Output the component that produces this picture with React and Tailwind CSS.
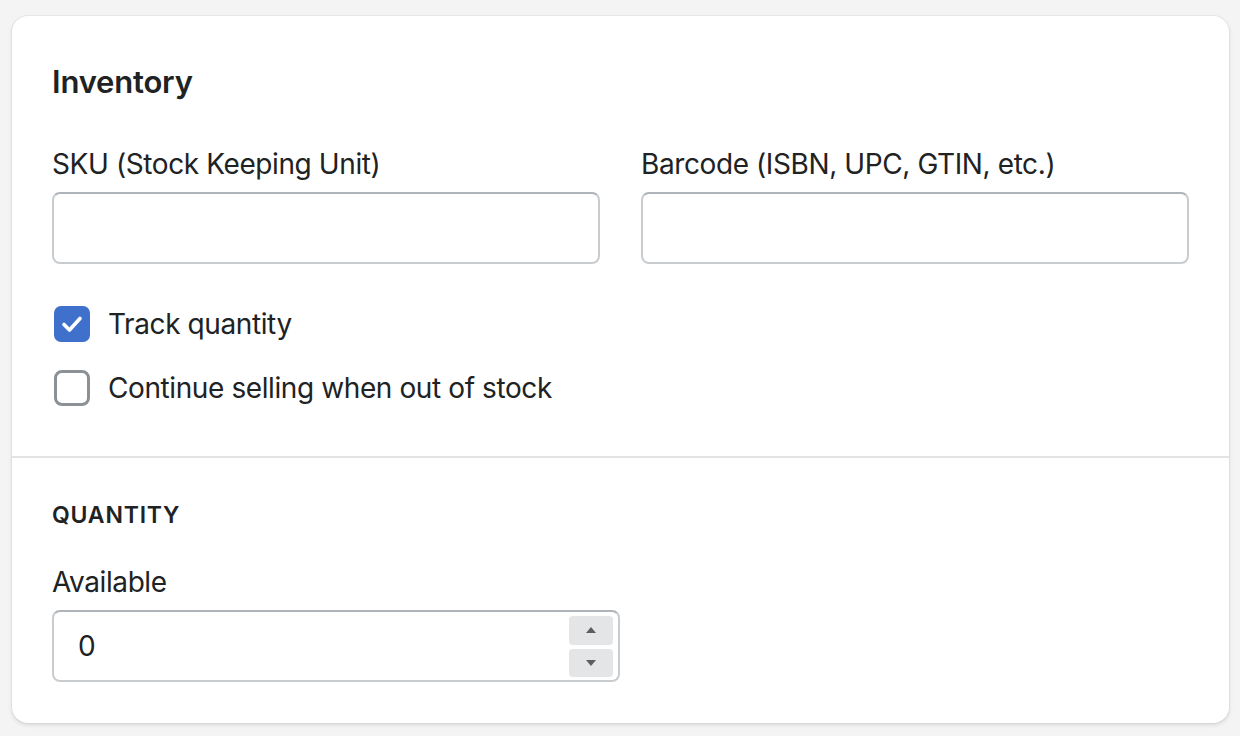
import React from "react";

export default function App() {
  return (
    <div className="min-h-[736px] w-[1240px] bg-[#f4f4f4] pt-[16px] pl-[12px] pr-[11px] pb-[14px]" style={{ fontFamily: "Inter, 'Noto Sans', sans-serif" }}>
      <div className="bg-white rounded-[16px] shadow-[0_0_0_1px_rgba(63,63,68,0.05),0_2px_4px_rgba(63,63,68,0.15)] text-[#202223]">
        <div className="px-[40px] pt-[46px] pb-[50px]">
          <h2 className="text-[31px] leading-[40px] font-semibold tracking-[-0.2px]">Inventory</h2>
          <div className="grid grid-cols-2 gap-[41px] mt-[42px]">
            <div>
              <label className="block text-[28px] leading-[40px] tracking-[-0.4px]">SKU (Stock Keeping Unit)</label>
              <div className="mt-[8px] h-[72px] rounded-[8px] border-2 border-[#c9cccf] border-t-[#aeb4b9]"></div>
            </div>
            <div>
              <label className="block text-[28px] leading-[40px] tracking-[-0.4px]">Barcode (ISBN, UPC, GTIN, etc.)</label>
              <div className="mt-[8px] h-[72px] rounded-[8px] border-2 border-[#c9cccf] border-t-[#aeb4b9]"></div>
            </div>
          </div>
          <div className="mt-[42px] flex flex-col gap-[28px]">
            <div className="flex items-center">
              <div className="ml-[2px] w-[36px] h-[36px] rounded-[7px] bg-[#3f70cb] flex items-center justify-center">
                <svg width="36" height="36" viewBox="0 0 36 36" fill="none">
                  <path d="M10 18.5l5.5 5.5 10.5-11.5" stroke="white" strokeWidth="3.6" strokeLinecap="round" strokeLinejoin="round" />
                </svg>
              </div>
              <span className="ml-[18px] text-[28px] leading-[36px] tracking-[-0.4px]">Track quantity</span>
            </div>
            <div className="flex items-center">
              <div className="ml-[2px] w-[36px] h-[36px] rounded-[8px] border-[3px] border-[#8c9196]"></div>
              <span className="ml-[18px] text-[28px] leading-[36px] tracking-[-0.4px]">Continue selling when out of stock</span>
            </div>
          </div>
        </div>
        <div className="h-[2px] bg-[#e1e3e5]"></div>
        <div className="px-[40px] pt-[42px] pb-[41px]">
          <h3 className="text-[23px] leading-[30px] font-semibold tracking-[0.8px] uppercase">Quantity</h3>
          <label className="block mt-[32px] text-[28px] leading-[40px] tracking-[-0.4px]">Available</label>
          <div className="mt-[8px] w-[568px] h-[72px] rounded-[8px] border-2 border-[#c9cccf] border-t-[#aeb4b9] flex items-center pl-[24px] pr-[5px]">
            <span className="flex-1 text-[28px] leading-[36px]">0</span>
            <div className="flex flex-col gap-[4px]">
              <div className="w-[44px] h-[29px] rounded-[4px] bg-[#e4e5e7] flex items-center justify-center">
                <svg width="12" height="8" viewBox="0 0 12 8"><path d="M1 7L6 1l5 6z" fill="#5c5f62" /></svg>
              </div>
              <div className="w-[44px] h-[28px] rounded-[4px] bg-[#e4e5e7] flex items-center justify-center">
                <svg width="12" height="8" viewBox="0 0 12 8"><path d="M1 1l5 6 5-6z" fill="#5c5f62" /></svg>
              </div>
            </div>
          </div>
        </div>
      </div>
    </div>
  );
}
